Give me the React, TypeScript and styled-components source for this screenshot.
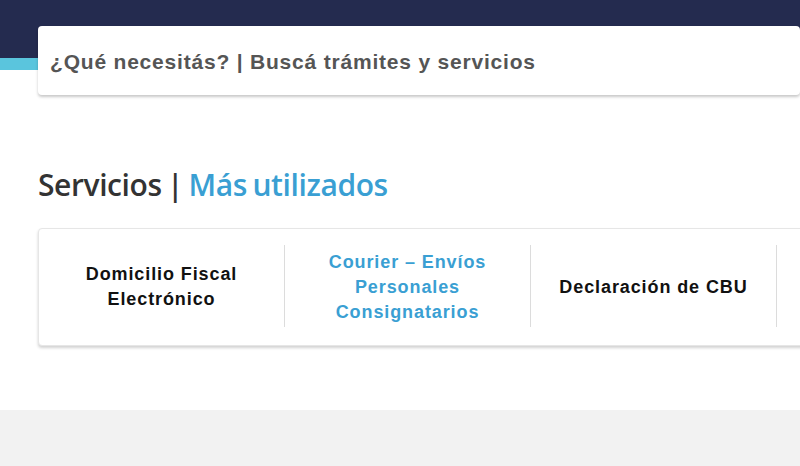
import styled, { createGlobalStyle } from "styled-components";

const GlobalStyle = createGlobalStyle`
  html, body {
    margin: 0;
    padding: 0;
    background: #ffffff;
  }
  body {
    font-family: "Liberation Sans", Arial, sans-serif;
    overflow: hidden;
  }
`;

const services = [
  { label: "Domicilio Fiscal Electrónico", highlight: false },
  { label: "Courier – Envíos Personales Consignatarios", highlight: true },
  { label: "Declaración de CBU", highlight: false },
  { label: "", highlight: false },
];

export default function App() {
  return (
    <Page>
      <GlobalStyle />
      <Top>
        <NavBar />
        <Stripe />
      </Top>
      <SearchWrap>
        <SearchBox>
          <SearchInput placeholder="¿Qué necesitás? | Buscá trámites y servicios" />
        </SearchBox>
      </SearchWrap>
      <Main>
        <Heading>
          Servicios <Bar>|</Bar> <Accent>Más utilizados</Accent>
        </Heading>
        <Card>
          {services.map((s, i) => (
            <Cell key={i}>
              <CellText $highlight={s.highlight}>{s.label}</CellText>
            </Cell>
          ))}
        </Card>
      </Main>
      <Footer />
    </Page>
  );
}

const Page = styled.div`
  width: 800px;
  height: 466px;
  display: flex;
  flex-direction: column;
  overflow: hidden;
`;

const Top = styled.div`
  display: flex;
  flex-direction: column;
`;

const NavBar = styled.div`
  height: 58px;
  background: #242b4f;
`;

const Stripe = styled.div`
  height: 12px;
  background: #5ac5dd;
`;

const SearchWrap = styled.div`
  margin-top: -44px;
  padding-left: 38px;
  display: flex;
`;

const SearchBox = styled.div`
  width: 800px;
  height: 69px;
  background: #ffffff;
  border-radius: 4px;
  box-shadow: 0 2px 3px rgba(0, 0, 0, 0.22);
  display: flex;
  align-items: center;
  padding-left: 10px;
  padding-top: 2px;
  box-sizing: border-box;
`;

const SearchInput = styled.input`
  border: none;
  outline: none;
  flex: 1;
  background: transparent;
  font-family: "Liberation Sans", Arial, sans-serif;
  font-weight: 700;
  font-size: 21px;
  letter-spacing: 0.8px;
  color: #555555;
  &::placeholder {
    color: #555555;
    opacity: 1;
  }
`;

const Main = styled.div`
  flex: 1;
  padding: 72px 0 0 38px;
  display: flex;
  flex-direction: column;
`;

const Heading = styled.h2`
  margin: 0;
  font-family: "Open Sans", sans-serif;
  font-weight: 600;
  font-size: 30px;
  line-height: 36px;
  letter-spacing: -0.4px;
  color: #333333;
  white-space: nowrap;
  word-spacing: -2px;
`;

const Bar = styled.span`
  color: #333333;
`;

const Accent = styled.span`
  color: #3a9fd3;
`;

const Card = styled.div`
  margin-top: 25px;
  width: 1000px;
  height: 118px;
  box-sizing: border-box;
  padding: 16px 0 18px;
  background: #ffffff;
  border: 1px solid #e6e6e6;
  border-radius: 4px;
  box-shadow: 0 2px 3px rgba(0, 0, 0, 0.18);
  display: flex;
`;

const Cell = styled.div`
  width: 246px;
  flex-shrink: 0;
  box-sizing: border-box;
  border-right: 1px solid #dcdcdc;
  display: flex;
  align-items: center;
  justify-content: center;
  padding: 2px 20px 0;
`;

const CellText = styled.span<{ $highlight: boolean }>`
  font-family: "Liberation Sans", Arial, sans-serif;
  font-weight: 700;
  font-size: 18px;
  line-height: 25px;
  letter-spacing: 0.9px;
  text-align: center;
  color: ${(p) => (p.$highlight ? "#3a9fd3" : "#111111")};
`;

const Footer = styled.div`
  height: 56px;
  background: #f2f2f2;
`;
